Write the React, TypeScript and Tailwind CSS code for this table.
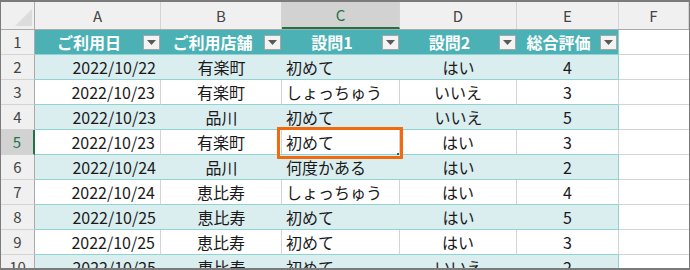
import React from "react";

type Row = { n: number; date: string; shop: string; q1: string; q2: string; score: string };

const rows: Row[] = [
  { n: 2, date: "2022/10/22", shop: "有楽町", q1: "初めて", q2: "はい", score: "4" },
  { n: 3, date: "2022/10/23", shop: "有楽町", q1: "しょっちゅう", q2: "いいえ", score: "3" },
  { n: 4, date: "2022/10/23", shop: "品川", q1: "初めて", q2: "いいえ", score: "5" },
  { n: 5, date: "2022/10/23", shop: "有楽町", q1: "初めて", q2: "はい", score: "3" },
  { n: 6, date: "2022/10/24", shop: "品川", q1: "何度かある", q2: "はい", score: "2" },
  { n: 7, date: "2022/10/24", shop: "恵比寿", q1: "しょっちゅう", q2: "はい", score: "4" },
  { n: 8, date: "2022/10/25", shop: "恵比寿", q1: "初めて", q2: "はい", score: "5" },
  { n: 9, date: "2022/10/25", shop: "恵比寿", q1: "初めて", q2: "はい", score: "3" },
  { n: 10, date: "2022/10/25", shop: "恵比寿", q1: "初めて", q2: "いいえ", score: "2" },
];

const cols = "grid grid-cols-[34px_126px_121px_118px_117px_102px_1fr]";

function FilterButton() {
  return (
    <span className="flex h-[15px] w-[17px] shrink-0 items-center justify-center border border-[#a6a6a6] bg-[#f3f3f3]">
      <svg width="9" height="5" viewBox="0 0 9 5">
        <path d="M0 0h9L4.5 5z" fill="#595959" />
      </svg>
    </span>
  );
}

function HeaderCell({ label, right }: { label: string; right?: boolean }) {
  return (
    <div
      className={`flex items-center border-b border-[#8fd3d4] bg-[#4bb1b4] pr-[1px] ${
        right ? "border-r" : ""
      }`}
    >
      <span className="flex-1 text-center font-bold text-white">{label}</span>
      <FilterButton />
    </div>
  );
}

export default function App() {
  const letters = ["A", "B", "C", "D", "E", "F"];
  return (
    <div
      className="relative h-[270px] w-[690px] overflow-hidden border-x border-t-2 border-b-2 border-[#7b7b7b] bg-white text-[16px] text-[#1a1a1a]"
      style={{ fontFamily: '"Noto Sans CJK JP", "Noto Sans", sans-serif' }}
    >
      {/* column letters */}
      <div className={`${cols} h-[28px] border-b border-[#ababab] bg-[#f0f0f0] text-[15px] text-[#444]`}>
        <div className="relative border-r border-[#ababab]">
          <svg className="absolute left-[14px] top-[7px]" width="17" height="17" viewBox="0 0 17 17">
            <path d="M17 0V17H0z" fill="#dcdcdc" />
          </svg>
        </div>
        {letters.map((l) => (
          <div
            key={l}
            className={`flex items-center justify-center border-r border-[#d4d4d4] leading-none ${
              l === "C" ? "border-b-2 border-b-[#217346] bg-[#d2d2d2] text-[#217346]" : ""
            }`}
          >
            {l}
          </div>
        ))}
      </div>

      {/* row 1: table header */}
      <div className={`${cols} h-[25px]`}>
        <div className="flex items-center justify-center border-r border-b border-[#ababab] border-b-[#d4d4d4] bg-[#f0f0f0] text-[15px] text-[#444]">
          1
        </div>
        <HeaderCell label="ご利用日" />
        <HeaderCell label="ご利用店舗" />
        <HeaderCell label="設問1" />
        <HeaderCell label="設問2" />
        <HeaderCell label="総合評価" right />
        <div className="border-b border-[#d4d4d4]" />
      </div>

      {rows.map((r) => {
        const band = r.n % 2 === 0;
        const sel = r.n === 5;
        const cell = `flex items-center border-b border-[#8fd3d4] px-[4px] ${
          band ? "bg-[#daeef0]" : "border-r border-r-[#d4d4d4]"
        }`;
        return (
          <div key={r.n} className={`${cols} h-[25px]`}>
            <div
              className={`flex items-center justify-center border-b border-[#d4d4d4] text-[15px] ${
                sel
                  ? "border-r-2 border-r-[#217346] bg-[#d2d2d2] text-[#217346]"
                  : "border-r border-r-[#ababab] bg-[#f0f0f0] text-[#444]"
              }`}
            >
              {r.n}
            </div>
            <div className={`${cell} justify-end pr-[5px]`}>{r.date}</div>
            <div className={`${cell} justify-center`}>{r.shop}</div>
            <div className={`${cell} justify-start`}>{r.q1}</div>
            <div className={`${cell} justify-center`}>{r.q2}</div>
            <div className={`${cell} justify-center border-r border-r-[#8fd3d4]`}>{r.score}</div>
            <div className="border-b border-[#d4d4d4]" />
          </div>
        );
      })}

      {/* selected cell outline */}
      <div className="absolute left-[276px] top-[125px] h-[32px] w-[126px] border-[3px] border-[#f26a10]">
        <span className="absolute bottom-[1px] right-[1px] h-[2px] w-[2px] bg-[#217346]" />
      </div>
    </div>
  );
}
